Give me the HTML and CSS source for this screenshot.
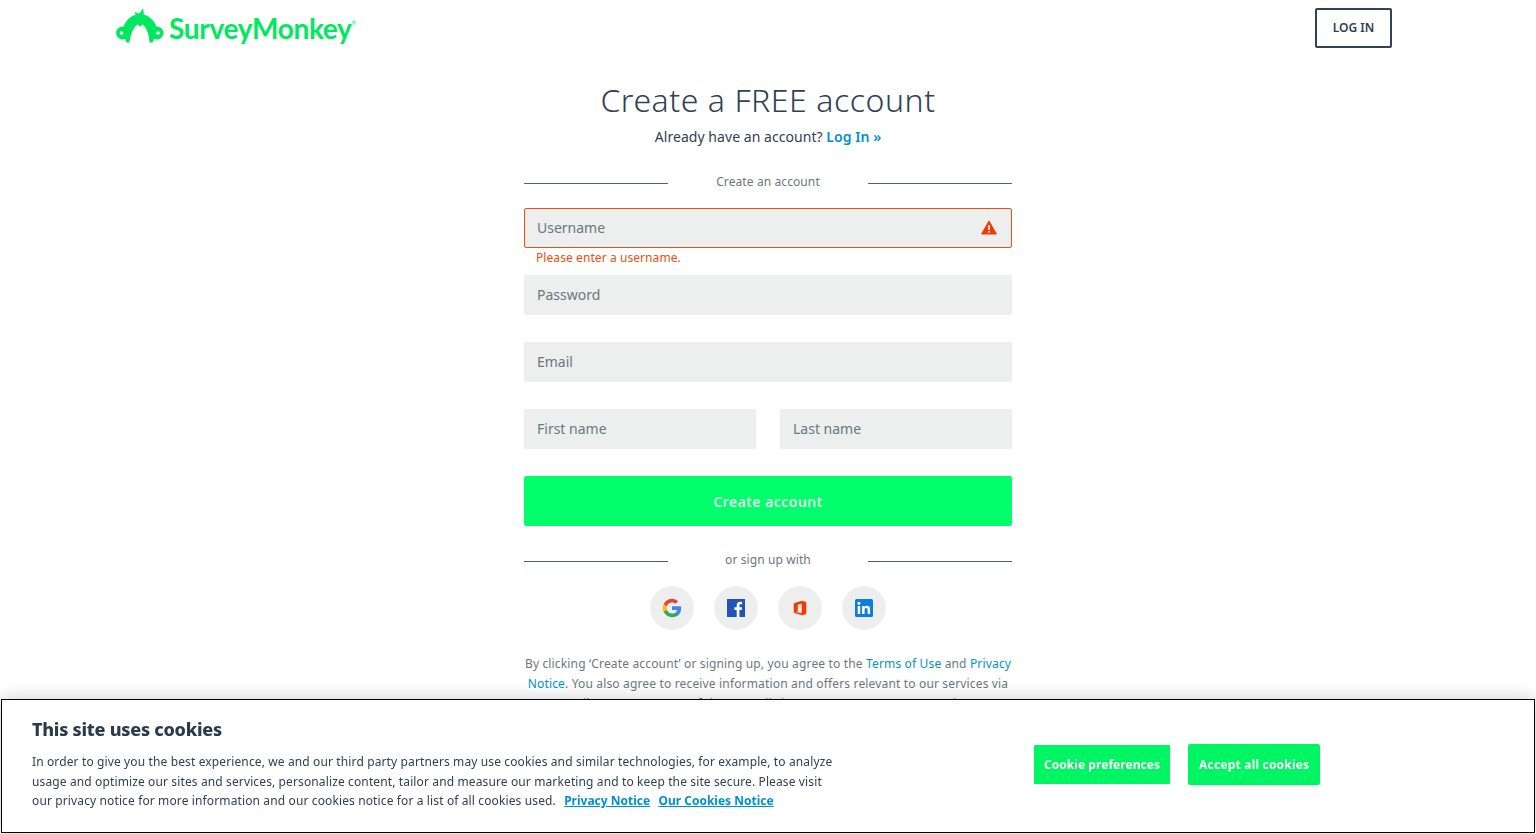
FILE: index.html
```html
<!DOCTYPE html>
<html lang="en">
<head>
  <meta charset="UTF-8">
  <meta name="viewport" content="width=device-width, initial-scale=1.0">
  <title>Create a FREE account</title>
  <link rel="stylesheet" href="styles.css">
</head>
<body>

<header class="topbar">
  <a class="logo" href="#">
    <svg class="logo-mark" width="48" height="36" viewBox="0 0 48 36">
      <path d="M20 7.500L18.300 3.500l4 2 1.700-.5L27 0l1 6.500z" fill="#00e860"/>
      <path d="M7 20C10 11 17 6 24 6s14 5 17 14l-3.500 12-1 2.500h-3C33 25 30 19 26.500 16.500L24 18.500l-2.500-2C18 19 14.500 25 13.500 34.500h-3l-1-2.500z" fill="#00e860"/>
      <circle cx="6.500" cy="25" r="6.500" fill="#00e860"/>
      <circle cx="41" cy="25" r="6.500" fill="#00e860"/>
      <circle cx="5.500" cy="25" r="1.800" fill="#fff"/>
      <circle cx="42" cy="25" r="1.800" fill="#fff"/>
    </svg>
    <span class="logo-text">SurveyMonkey<sup>®</sup></span>
  </a>
  <a class="login-btn" href="#">LOG IN</a>
</header>

<main class="signup">
  <h1>Create a FREE account</h1>
  <p class="have-account">Already have an account? <a href="#">Log In »</a></p>

  <div class="divider"><span>Create an account</span></div>

  <form class="form">
    <div class="field field-error">
      <input type="text" placeholder="Username">
      <svg class="warn" width="16" height="15" viewBox="0 0 16 15">
        <path d="M8 1.500L15 13.800H1z" fill="#f23b00" stroke="#f23b00" stroke-width="1.500" stroke-linejoin="round"/>
        <rect x="7.200" y="5" width="1.600" height="5" fill="#fff"/>
        <rect x="7.200" y="11" width="1.600" height="1.700" fill="#fff"/>
      </svg>
      <div class="error-msg">Please enter a username.</div>
    </div>
    <div class="field"><input type="password" placeholder="Password"></div>
    <div class="field"><input type="email" placeholder="Email"></div>
    <div class="field-row">
      <input type="text" placeholder="First name">
      <input type="text" placeholder="Last name">
    </div>
    <button class="submit" type="button">Create account</button>
  </form>

  <div class="divider divider-alt"><span>or sign up with</span></div>

  <div class="socials">
    <a href="#" class="social">
      <svg width="20" height="20" viewBox="0 0 48 48">
        <path d="M46 24.500c0-1.600-.1-3.100-.4-4.500H24v9h12.400c-.5 2.600-2.100 5-4.400 6.500v5.600h7.100c4.200-3.900 6.900-9.600 6.900-16.600z" fill="#4285f4"/>
        <path d="M24 46c6 0 10.900-2 14.600-5.400l-7.100-5.500c-2 1.300-4.500 2.100-7.500 2.100-5.800 0-10.600-3.900-12.400-9.100H4.300v5.700C8 41.200 15.400 46 24 46z" fill="#34a853"/>
        <path d="M11.600 28.100c-1-2.700-1-5.600 0-8.200v-5.700H4.300c-3.100 6.200-3.100 13.400 0 19.600z" fill="#fbbc05"/>
        <path d="M24 10.700c3.200 0 6.100 1.100 8.300 3.300l6.300-6.300C34.900 4.200 29.900 2 24 2 15.400 2 8 6.900 4.300 14.200l7.300 5.700c1.800-5.300 6.600-9.200 12.400-9.200z" fill="#ea4335"/>
      </svg>
    </a>
    <a href="#" class="social">
      <svg width="18" height="18" viewBox="0 0 18 18">
        <rect width="18" height="18" fill="#2353b8"/>
        <path d="M12.400 18v-7h2.300l.4-2.700h-2.700V6.600c0-.8.300-1.300 1.400-1.300h1.400V2.900c-.3 0-1.100-.1-2-.1-2.100 0-3.500 1.300-3.500 3.500v2H7.400V11h2.300v7z" fill="#fff"/>
      </svg>
    </a>
    <a href="#" class="social">
      <svg width="14" height="16" viewBox="0 0 14 16">
        <path d="M1 3.500L9 1l4 1.200v11.600L9 15l-8-2.500 8 .8V3.500L4.500 4.500v6.800L1 12.500z" fill="#f03c00" stroke="#f03c00" stroke-width=".6"/>
      </svg>
    </a>
    <a href="#" class="social">
      <svg width="18" height="18" viewBox="0 0 18 18">
        <rect width="18" height="18" rx="1.500" fill="#0a7ee0"/>
        <rect x="2.700" y="7" width="2.500" height="8" fill="#fff"/>
        <circle cx="3.950" cy="4.300" r="1.500" fill="#fff"/>
        <path d="M7 7h2.400v1.100c.4-.7 1.300-1.300 2.600-1.300 2.500 0 3.100 1.600 3.100 3.800V15h-2.500v-3.900c0-1 0-2.200-1.400-2.200s-1.600 1-1.600 2.100v4H7z" fill="#fff"/>
      </svg>
    </a>
  </div>

  <p class="legal">By clicking ‘Create account’ or signing up, you agree to the <a href="#">Terms of Use</a> and <a href="#">Privacy Notice</a>. You also agree to receive information and offers relevant to our services via email. You can opt out of these emails in your My Account page anytime.</p>
</main>

<section class="cookies">
  <div class="cookies-text">
    <h2>This site uses cookies</h2>
    <p>In order to give you the best experience, we and our third party partners may use cookies and similar technologies, for example, to analyze usage and optimize our sites and services, personalize content, tailor and measure our marketing and to keep the site secure. Please visit our privacy notice for more information and our cookies notice for a list of all cookies used. <a href="#">Privacy Notice</a> <a href="#">Our Cookies Notice</a></p>
  </div>
  <div class="cookies-actions">
    <button type="button">Cookie preferences</button>
    <button class="accept" type="button">Accept all cookies</button>
  </div>
</section>

</body>
</html>
```

FILE: styles.css
```css
html, body { height: 100%; margin: 0; overflow: hidden; }
body { font-family: "Noto Sans", "Open Sans", Arial, sans-serif; color: #2f4154; background: #fff; }
a { text-decoration: none; }

.topbar { display: flex; justify-content: space-between; align-items: flex-start; padding: 8px 144px 0 116px; height: 80px; box-sizing: border-box; }
.logo { display: flex; align-items: flex-start; height: 36px; }
.logo-mark { margin-right: 5px; flex: none; }
.logo-text { font-family: "Lato", sans-serif; font-size: 28px; line-height: 40px; font-weight: 700; color: #00e860; letter-spacing: -0.3px; }
.logo-text sup { font-size: 6px; line-height: 0; vertical-align: 14px; font-weight: 400; }
.login-btn { display: block; width: 77px; height: 40px; line-height: 36px; text-align: center; box-sizing: border-box; border: 2px solid #2f4154; border-radius: 2px; font-size: 12px; font-weight: 600; color: #2f4154; }

.signup { width: 488px; margin: 0 auto; }
h1 { margin: 0; font-size: 32px; font-weight: 300; line-height: 40px; text-align: center; letter-spacing: 0.55px; color: #2f4154; }
.have-account { margin: 6px 0 0; font-size: 14px; line-height: 21px; text-align: center; letter-spacing: 0.05px; }
.have-account a { color: #0090d0; font-weight: 600; }

.divider { display: flex; justify-content: space-between; align-items: center; margin-top: 22px; height: 24px; font-size: 12px; letter-spacing: 0.1px; color: #6b787f; }
.divider::before, .divider::after { content: ""; width: 144px; height: 1px; background: #46677d; margin-top: 4px; }
.divider-alt { margin-top: 21px; }

.form { margin-top: 15px; }
.field { position: relative; height: 40px; margin-bottom: 27px; }
input { display: block; width: 100%; height: 40px; box-sizing: border-box; padding: 0 13px 2px; border: none; background: #edeeee; font: 14px "Noto Sans", sans-serif; border-radius: 2px; }
input::placeholder { color: #6b787f; opacity: 1; }
.field-error input { border: 1px solid #f0500f; padding: 0 12px 2px; }
.warn { position: absolute; right: 15px; top: 12px; }
.error-msg { padding: 1px 12px 0; font-size: 12px; line-height: 17px; letter-spacing: 0.08px; color: #e8500e; }
.field-row { display: flex; gap: 24px; margin-bottom: 27px; }
.field-row input { flex: 1; min-width: 0; }
.submit { display: block; width: 100%; height: 50px; border: none; border-radius: 2px; background: #00ff6a; color: #fff; font: 500 14px "Noto Sans", sans-serif; letter-spacing: 0.6px; }

.socials { display: flex; justify-content: center; gap: 20px; margin-top: 15px; }
.social { display: flex; align-items: center; justify-content: center; width: 44px; height: 44px; border-radius: 50%; background: #edeeee; }

.legal { margin: 24px 0 0; font-size: 12px; line-height: 20px; text-align: center; letter-spacing: 0.16px; color: #6b787f; }
.legal a { color: #0094c8; }

.cookies { position: fixed; left: 1px; right: 1px; bottom: 1px; height: 134px; box-sizing: border-box; border: 1px solid #000; background: #fff; box-shadow: 0 0 18px rgba(0, 0, 0, 0.2); display: flex; padding: 17px 30px 0; }
.cookies-text { width: 810px; }
.cookies h2 { margin: 0; font-size: 18px; line-height: 24px; font-weight: 800; letter-spacing: -0.25px; color: #2b3b4d; }
.cookies p { margin: 11px 0 0; font-size: 12px; line-height: 19.500px; letter-spacing: 0.125px; color: #2f4154; }
.cookies p a { color: #0090d0; font-weight: 700; letter-spacing: 0; text-decoration: underline; margin-left: 5px; }
.cookies-actions { display: flex; gap: 18px; margin: 27px 0 0 192px; align-items: center; height: 41px; }
.cookies-actions button { height: 39px; padding: 0 10px; border: none; border-radius: 1px; background: #00f562; color: #fff; font: 700 12px "Noto Sans", sans-serif; letter-spacing: 0.05px; white-space: nowrap; }
.cookies-actions .accept { height: 41px; padding: 0 11px; border-radius: 2px; letter-spacing: 0.2px; }
```
